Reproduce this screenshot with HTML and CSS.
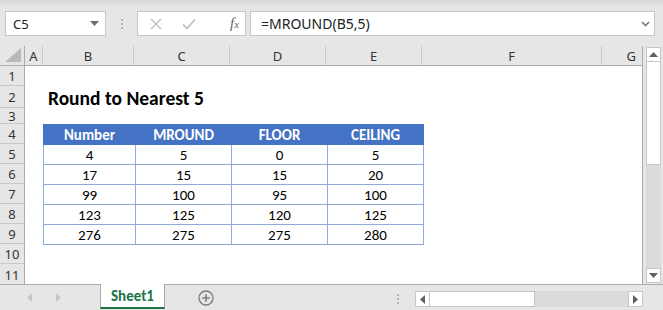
FILE: index.html
```html
<!DOCTYPE html>
<html lang="en">
<head>
<meta charset="UTF-8" />
<title>Round to Nearest 5</title>
<link rel="stylesheet" href="styles.css">
</head>
<body>
<div class="app">
  <!-- formula bar -->
  <div class="formula-row">
    <div class="name-box">
      <span>C5</span>
      <svg class="caret" width="9" height="5" viewBox="0 0 9 5"><path d="M0 0h9L4.5 5z" fill="#6d6d6d"/></svg>
    </div>
    <div class="grip"><i></i><i></i><i></i></div>
    <div class="fx-buttons">
      <svg width="12" height="12" viewBox="0 0 12 12"><path d="M1 1l10 10M11 1L1 11" stroke="#bdbdbd" stroke-width="1.3" fill="none"/></svg>
      <svg width="14" height="12" viewBox="0 0 14 12"><path d="M1 6.5l4 4L13 1.5" stroke="#bdbdbd" stroke-width="1.6" fill="none"/></svg>
      <span class="fx">f<small>x</small></span>
    </div>
    <div class="formula-input">
      <span>=MROUND(B5,5)</span>
      <svg class="chev" width="9" height="6" viewBox="0 0 9 6"><path d="M1 1l3.5 3.5L8 1" stroke="#7a7a7a" stroke-width="1.6" fill="none"/></svg>
    </div>
  </div>

  <div class="sheet">
    <div class="grid">
      <div class="corner"><svg width="16" height="14" viewBox="0 0 16 14"><path d="M16 0v14H0z" fill="#b9b9b9"/></svg></div>
      <div class="col-head">A</div>
      <div class="col-head">B</div>
      <div class="col-head">C</div>
      <div class="col-head">D</div>
      <div class="col-head">E</div>
      <div class="col-head">F</div>
      <div class="col-head last">G</div>

      <div class="row-head r1">1</div>
      <div class="row-head r2">2</div>
      <div class="row-head r3">3</div>
      <div class="row-head r4">4</div>
      <div class="row-head r5">5</div>
      <div class="row-head r6">6</div>
      <div class="row-head r7">7</div>
      <div class="row-head r8">8</div>
      <div class="row-head r9">9</div>
      <div class="row-head r10">10</div>
      <div class="row-head r11">11</div>

      <div class="title">Round to Nearest 5</div>

      <table class="data">
        <colgroup><col class="c-b"><col class="c-x"><col class="c-x"><col class="c-x"></colgroup>
        <tr><th>Number</th><th>MROUND</th><th>FLOOR</th><th>CEILING</th></tr>
        <tr><td>4</td><td>5</td><td>0</td><td>5</td></tr>
        <tr><td>17</td><td>15</td><td>15</td><td>20</td></tr>
        <tr><td>99</td><td>100</td><td>95</td><td>100</td></tr>
        <tr><td>123</td><td>125</td><td>120</td><td>125</td></tr>
        <tr><td>276</td><td>275</td><td>275</td><td>280</td></tr>
      </table>
    </div>

    <div class="vscroll">
      <div class="sb-btn"><svg width="9" height="5" viewBox="0 0 9 5"><path d="M0 5h9L4.5 0z" fill="#606060"/></svg></div>
      <div class="v-thumb"></div>
      <div class="v-track"></div>
      <div class="sb-btn"><svg width="9" height="5" viewBox="0 0 9 5"><path d="M0 0h9L4.5 5z" fill="#606060"/></svg></div>
    </div>
  </div>

  <div class="tab-bar">
    <div class="tab-nav">
      <svg width="5" height="9" viewBox="0 0 5 9"><path d="M5 0v9L0 4.5z" fill="#c6c6c6"/></svg>
      <svg width="5" height="9" viewBox="0 0 5 9"><path d="M0 0v9l5-4.5z" fill="#c6c6c6"/></svg>
    </div>
    <div class="tab">Sheet1</div>
    <div class="add-sheet">
      <svg width="16" height="16" viewBox="0 0 16 16"><circle cx="8" cy="8" r="7" fill="none" stroke="#7b7b7b" stroke-width="1.3"/><path d="M8 4.2v7.6M4.2 8h7.6" stroke="#7b7b7b" stroke-width="1.6"/></svg>
    </div>
    <div class="grip small"><i></i><i></i><i></i></div>
    <div class="hscroll">
      <div class="sb-btn"><svg width="5" height="9" viewBox="0 0 5 9"><path d="M5 0v9L0 4.5z" fill="#606060"/></svg></div>
      <div class="h-thumb"></div>
      <div class="h-track"></div>
      <div class="sb-btn"><svg width="5" height="9" viewBox="0 0 5 9"><path d="M0 0v9l5-4.5z" fill="#606060"/></svg></div>
    </div>
  </div>
</div>
</body>
</html>
```

FILE: styles.css
```css
* {
  box-sizing: border-box;
}
body {
  margin: 0;
  background: #e6e6e6;
  font-family: 'Segoe UI', 'Noto Sans', 'DejaVu Sans', sans-serif;
  overflow: hidden;
}
.app {
  width: 663px;
  height: 310px;
  display: flex;
  flex-direction: column;
  background: #e6e6e6;
}

/* Formula bar */
.formula-row {
  height: 46px;
  display: flex;
  align-items: flex-start;
  padding: 11px 0 0 5px;
  background: linear-gradient(#d6d6d6, #e6e6e6 6px);
}
.name-box {
  width: 101px;
  height: 25px;
  background: #fff;
  border: 1px solid #c6c6c6;
  display: flex;
  align-items: center;
  justify-content: space-between;
  padding: 0 6px 0 7px;
  font-size: 13px;
  color: #222;
}
.grip {
  width: 31px;
  height: 25px;
  display: flex;
  flex-direction: column;
  align-items: center;
  justify-content: center;
  gap: 2px;
}
.grip i {
  width: 2px;
  height: 2px;
  background: #b3b3b3;
}
.fx-buttons {
  width: 109px;
  height: 25px;
  background: #fff;
  border: 1px solid #c6c6c6;
  display: flex;
  align-items: center;
  padding: 0 0 0 12px;
  gap: 20px;
}
.fx {
  font-family: 'Liberation Serif', serif;
  font-style: italic;
  font-size: 15px;
  color: #666;
  margin-left: 14px;
}
.fx small {
  font-size: 11px;
}
.formula-input {
  width: 405px;
  height: 25px;
  margin-left: 4px;
  background: #fff;
  border: 1px solid #c6c6c6;
  display: flex;
  align-items: center;
  justify-content: space-between;
  padding: 0 4px 0 10px;
  font-size: 14px;
  color: #222;
}

/* Sheet */
.sheet {
  height: 238px;
  display: flex;
}
.grid {
  width: 643px;
  background: #fff;
  border-right: 1px solid #ababab;
  display: grid;
  grid-template-columns: 25px 18px 91px 96px 96px 96px 180px 40px;
  grid-template-rows: 20px 20px 22px 16px repeat(8, 20px);
  font-family: Carlito, Lato, 'Liberation Sans', sans-serif;
}
.corner {
  background: #e6e6e6;
  border-right: 1px solid #ababab;
  border-bottom: 1px solid #ababab;
  display: flex;
  align-items: flex-end;
  justify-content: flex-end;
  padding: 0 3px 3px 0;
}
.col-head {
  background: #e6e6e6;
  border-bottom: 1px solid #ababab;
  border-right: 1px solid #c9c9c9;
  display: flex;
  align-items: center;
  justify-content: center;
  font-family: 'Segoe UI', 'Noto Sans', 'DejaVu Sans', sans-serif;
  font-size: 13px;
  color: #333;
}
.col-head.last {
  border-right: none;
  justify-content: flex-end;
  padding-right: 6px;
}
.row-head {
  grid-column: 1;
  background: #e6e6e6;
  border-right: 1px solid #ababab;
  border-bottom: 1px solid #c9c9c9;
  display: flex;
  align-items: center;
  justify-content: center;
  font-family: 'Segoe UI', 'Noto Sans', 'DejaVu Sans', sans-serif;
  font-size: 13px;
  color: #333;
  padding-top: 1px;
}
.r1 { grid-row: 2; }
.r2 { grid-row: 3; }
.r3 { grid-row: 4; }
.r4 { grid-row: 5; }
.r5 { grid-row: 6; }
.r6 { grid-row: 7; }
.r7 { grid-row: 8; }
.r8 { grid-row: 9; }
.r9 { grid-row: 10; }
.r10 { grid-row: 11; }
.r11 { grid-row: 12; border-bottom: none; }

.title {
  grid-column: 3 / 7;
  grid-row: 3;
  padding: 0 0 0 5px;
  font-weight: 700;
  font-size: 19.5px;
  color: #000;
}

.data {
  grid-column: 3 / 7;
  grid-row: 5 / 11;
  border-collapse: collapse;
  table-layout: fixed;
  width: 380px;
}
.c-b { width: 92px; }
.c-x { width: 96px; }
.data th,
.data td {
  height: 20px;
  padding: 0;
  text-align: center;
  font-size: 15px;
  border: 1px solid #8eaadb;
}
.data th {
  background: #4472c4;
  color: #fff;
  font-weight: 700;
  border-color: #4472c4;
}
.data tr + tr td {
  color: #000;
}

/* Scrollbars */
.vscroll {
  width: 20px;
  padding: 1px 2px 1px 3px;
  display: flex;
  flex-direction: column;
  background: #e6e6e6;
}
.sb-btn {
  width: 15px;
  height: 15px;
  background: #fff;
  border: 1px solid #c6c6c6;
  display: flex;
  align-items: center;
  justify-content: center;
  flex-shrink: 0;
}
.v-thumb {
  height: 103px;
  background: #fff;
  border: 1px solid #c6c6c6;
  border-top: none;
}
.v-track {
  flex: 1;
  background: #dbdbdb;
}

.tab-bar {
  height: 26px;
  border-top: 1px solid #ababab;
  display: flex;
  align-items: flex-start;
}
.tab-nav {
  width: 100px;
  height: 25px;
  display: flex;
  align-items: center;
  padding-left: 27px;
  gap: 24px;
}
.tab {
  width: 65px;
  height: 25px;
  margin-top: -1px;
  background: #fff;
  border: 1px solid #ababab;
  border-top: none;
  border-bottom: 2px solid #217346;
  color: #217346;
  font-family: Carlito, Lato, 'Liberation Sans', sans-serif;
  font-weight: 700;
  font-size: 15px;
  display: flex;
  align-items: center;
  justify-content: center;
}
.add-sheet {
  width: 83px;
  height: 25px;
  display: flex;
  align-items: center;
  padding-left: 33px;
}
.grip.small {
  width: 167px;
  height: 25px;
  align-items: flex-end;
  padding: 3px 16px 0 0;
}
.hscroll {
  width: 228px;
  height: 16px;
  margin-top: 6px;
  display: flex;
}
.hscroll .sb-btn {
  height: 16px;
}
.h-thumb {
  width: 105px;
  background: #fff;
  border: 1px solid #c6c6c6;
  border-left: none;
}
.h-track {
  flex: 1;
  background: #dbdbdb;
}
```
